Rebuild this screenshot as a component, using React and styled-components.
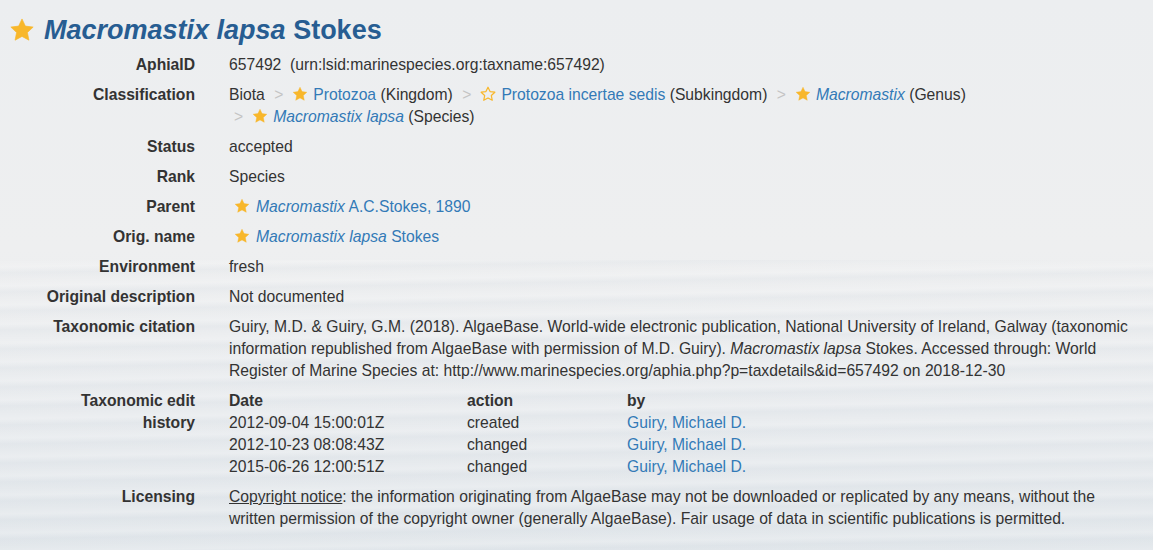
import React from "react";
import styled, { createGlobalStyle } from "styled-components";

const GlobalStyle = createGlobalStyle`
  html, body {
    margin: 0;
    padding: 0;
  }
  body {
    font-family: "Liberation Sans", Arial, sans-serif;
    font-size: 15.7px;
    color: #333;
    background:
      repeating-linear-gradient(179deg, rgba(255,255,255,0) 0px, rgba(255,255,255,0.18) 7px, rgba(190,202,214,0.10) 13px, rgba(255,255,255,0) 19px) 0 260px / 100% 100% no-repeat,
      linear-gradient(180deg, #eceef0 0%, #eeeff0 45%, #e8ebee 75%, #e2e7eb 100%);
    min-height: 550px;
  }
`;

const Page = styled.div`
  padding: 13px 8px 20px 8px;
  max-width: 1148px;
  box-sizing: border-box;
`;

const Title = styled.h1`
  display: flex;
  align-items: center;
  gap: 4px;
  margin: 0 0 3px 1px;
  font-size: 27px;
  line-height: 34px;
  font-weight: bold;
  color: #275d92;
  em {
    font-style: italic;
  }
`;

const Fields = styled.dl`
  display: grid;
  grid-template-columns: 187px 1fr;
  column-gap: 34px;
  margin: 0;
`;

const Label = styled.dt`
  text-align: right;
  font-weight: bold;
  line-height: 22px;
  padding: 4px 0;
`;

const Value = styled.dd`
  margin: 0;
  line-height: 22px;
  padding: 4px 0;
`;

const TaxLink = styled.a`
  color: #337ab7;
  text-decoration: none;
  font-style: ${(p) => (p.$italic ? "italic" : "normal")};
`;

const Crumb = styled.span`
  white-space: nowrap;
`;

const Sep = styled.span`
  color: #c4c4c4;
  padding: 0 9px 0 5px;
`;

const StarWrap = styled.span`
  display: inline-block;
  vertical-align: ${(p) => (p.$big ? "middle" : "-2px")};
  margin: ${(p) => (p.$indent ? "0 6px 0 5px" : "0 5px 0 0")};
  line-height: 0;
`;

const Star = ({ size = 16, outline, indent, big }) => (
  <StarWrap $indent={indent} $big={big}>
    <svg width={size} height={size} viewBox="0 0 24 24">
      <path
        d="M12 1.8l3.1 6.6 7.2.9-5.3 5 1.4 7.1L12 17.9l-6.4 3.5 1.4-7.1-5.3-5 7.2-.9z"
        fill={outline ? "none" : "#f8b72b"}
        stroke="#f8b72b"
        strokeWidth={outline ? 1.8 : 0.6}
        strokeLinejoin="round"
      />
    </svg>
  </StarWrap>
);

const History = styled.table`
  border-collapse: collapse;
  width: 100%;
  th, td {
    padding: 0;
    text-align: left;
    line-height: 22px;
    vertical-align: top;
  }
  th {
    font-weight: bold;
  }
`;

const Col = styled.col`
  width: ${(p) => p.$w}px;
`;

const Underlined = styled.span`
  text-decoration: underline;
`;

const edits = [
  ["2012-09-04 15:00:01Z", "created"],
  ["2012-10-23 08:08:43Z", "changed"],
  ["2015-06-26 12:00:51Z", "changed"],
];

const crumbs = [
  { name: "Protozoa", rank: "Kingdom" },
  { name: "Protozoa incertae sedis", rank: "Subkingdom", outline: true },
  { name: "Macromastix", rank: "Genus", italic: true },
  { name: "Macromastix lapsa", rank: "Species", italic: true },
];

export default function App() {
  return (
    <>
      <GlobalStyle />
      <Page>
        <Title>
          <Star size={26} big />
          <span>
            <em>Macromastix lapsa</em> Stokes
          </span>
        </Title>
        <Fields>
          <Label>AphiaID</Label>
          <Value>657492&nbsp; (urn:lsid:marinespecies.org:taxname:657492)</Value>

          <Label>Classification</Label>
          <Value>
            <Crumb>Biota</Crumb>
            {crumbs.map((c) => (
              <React.Fragment key={c.name}>
                {" "}
                <Crumb>
                  <Sep>&gt;</Sep>
                  <Star outline={c.outline} />
                  <TaxLink href="#" $italic={c.italic}>
                    {c.name}
                  </TaxLink>{" "}
                  ({c.rank})
                </Crumb>
              </React.Fragment>
            ))}
          </Value>

          <Label>Status</Label>
          <Value>accepted</Value>

          <Label>Rank</Label>
          <Value>Species</Value>

          <Label>Parent</Label>
          <Value>
            <Star indent />
            <TaxLink href="#">
              <i>Macromastix</i> A.C.Stokes, 1890
            </TaxLink>
          </Value>

          <Label>Orig. name</Label>
          <Value>
            <Star indent />
            <TaxLink href="#">
              <i>Macromastix lapsa</i> Stokes
            </TaxLink>
          </Value>

          <Label>Environment</Label>
          <Value>fresh</Value>

          <Label>Original description</Label>
          <Value>Not documented</Value>

          <Label>Taxonomic citation</Label>
          <Value>
            Guiry, M.D. &amp; Guiry, G.M. (2018). AlgaeBase. World-wide electronic
            publication, National University of Ireland, Galway (taxonomic
            information republished from AlgaeBase with permission of M.D. Guiry).{" "}
            <i>Macromastix lapsa</i> Stokes. Accessed through: World Register of
            Marine Species at:
            http://www.marinespecies.org/aphia.php?p=taxdetails&amp;id=657492 on
            2018-12-30
          </Value>

          <Label>
            Taxonomic edit
            <br />
            history
          </Label>
          <Value>
            <History>
              <colgroup>
                <Col $w={238} />
                <Col $w={160} />
                <col />
              </colgroup>
              <thead>
                <tr>
                  <th>Date</th>
                  <th>action</th>
                  <th>by</th>
                </tr>
              </thead>
              <tbody>
                {edits.map(([d, a]) => (
                  <tr key={d}>
                    <td>{d}</td>
                    <td>{a}</td>
                    <td>
                      <TaxLink href="#">Guiry, Michael D.</TaxLink>
                    </td>
                  </tr>
                ))}
              </tbody>
            </History>
          </Value>

          <Label>Licensing</Label>
          <Value>
            <Underlined>Copyright notice</Underlined>: the information originating
            from AlgaeBase may not be downloaded or replicated by any means, without
            the written permission of the copyright owner (generally AlgaeBase).
            Fair usage of data in scientific publications is permitted.
          </Value>
        </Fields>
      </Page>
    </>
  );
}
